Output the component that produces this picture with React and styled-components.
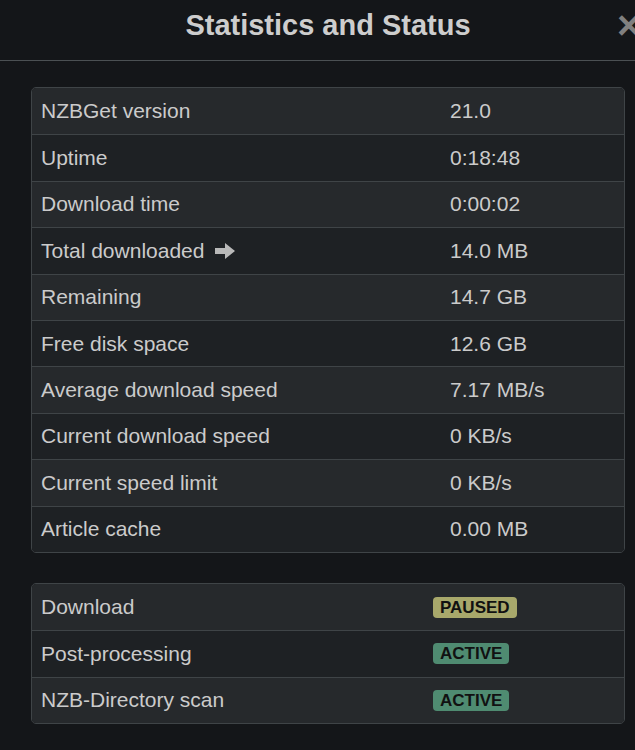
import React from "react"
import styled, { createGlobalStyle } from "styled-components"

const GlobalStyle = createGlobalStyle`
  body {
    margin: 0;
    background: #141619;
    font-family: "Liberation Sans", Arial, sans-serif;
    overflow: hidden;
  }
`

const Modal = styled.div`
  width: 656px;
  background: #141619;
  color: #cccccc;
`

const Header = styled.div`
  position: relative;
  height: 60px;
  display: flex;
  align-items: center;
  justify-content: center;
  border-bottom: 1px solid #4b5053;
`

const Title = styled.h3`
  margin: 0;
  font-size: 29px;
  font-weight: bold;
  color: #cdcdcd;
  line-height: 1;
  padding-bottom: 10px;
`

const Close = styled.span`
  position: absolute;
  left: 617px;
  top: 5px;
  font-size: 40px;
  font-weight: bold;
  line-height: 1;
  color: #808080;
`

const Body = styled.div`
  padding: 26px 31px;
  display: flex;
  flex-direction: column;
  gap: 30px;
`

const Footer = styled.div`
  border-top: 1px solid #3c4043;
  height: 10px;
`

const Table = styled.div`
  border: 1px solid #3f4447;
  border-radius: 5px;
  overflow: hidden;
`

const Row = styled.div`
  display: grid;
  grid-template-columns: ${p => p.$labelWidth}px 1fr;
  align-items: center;
  height: 46.4px;
  box-sizing: border-box;
  background: ${p => (p.$odd ? "#26292c" : "#1e2124")};
  & + & {
    border-top: 1px solid #3f4447;
  }
`

const Cell = styled.div`
  padding: 0 9px;
  font-size: 21px;
  color: #cbcbcb;
  display: flex;
  align-items: center;
  gap: 11px;
`

const Badge = styled.span`
  display: inline-block;
  font-size: 17px;
  font-weight: bold;
  line-height: 21px;
  padding: 0 7px;
  border-radius: 4px;
  color: #111111;
  background: ${p => (p.$kind === "paused" ? "#a8a86b" : "#4f8b71")};
`

const ArrowIcon = () => (
  <svg width="20" height="16" viewBox="0 0 20 16">
    <path d="M0 5h10V0l10 8-10 8v-5H0z" fill="#b9b9b9" />
  </svg>
)

const stats = [
  ["NZBGet version", "21.0"],
  ["Uptime", "0:18:48"],
  ["Download time", "0:00:02"],
  ["Total downloaded", "14.0 MB", true],
  ["Remaining", "14.7 GB"],
  ["Free disk space", "12.6 GB"],
  ["Average download speed", "7.17 MB/s"],
  ["Current download speed", "0 KB/s"],
  ["Current speed limit", "0 KB/s"],
  ["Article cache", "0.00 MB"],
]

const status = [
  ["Download", "PAUSED", "paused"],
  ["Post-processing", "ACTIVE", "active"],
  ["NZB-Directory scan", "ACTIVE", "active"],
]

export default function App() {
  return (
    <>
      <GlobalStyle />
      <Modal>
        <Header>
          <Title>Statistics and Status</Title>
          <Close>×</Close>
        </Header>
        <Body>
          <Table>
            {stats.map(([label, value, arrow], i) => (
              <Row key={label} $odd={i % 2 === 0} $labelWidth={409}>
                <Cell>
                  {label}
                  {arrow && <ArrowIcon />}
                </Cell>
                <Cell>{value}</Cell>
              </Row>
            ))}
          </Table>
          <Table>
            {status.map(([label, value, kind], i) => (
              <Row key={label} $odd={i % 2 === 0} $labelWidth={392}>
                <Cell>{label}</Cell>
                <Cell>
                  <Badge $kind={kind}>{value}</Badge>
                </Cell>
              </Row>
            ))}
          </Table>
        </Body>
        <Footer />
      </Modal>
    </>
  )
}
